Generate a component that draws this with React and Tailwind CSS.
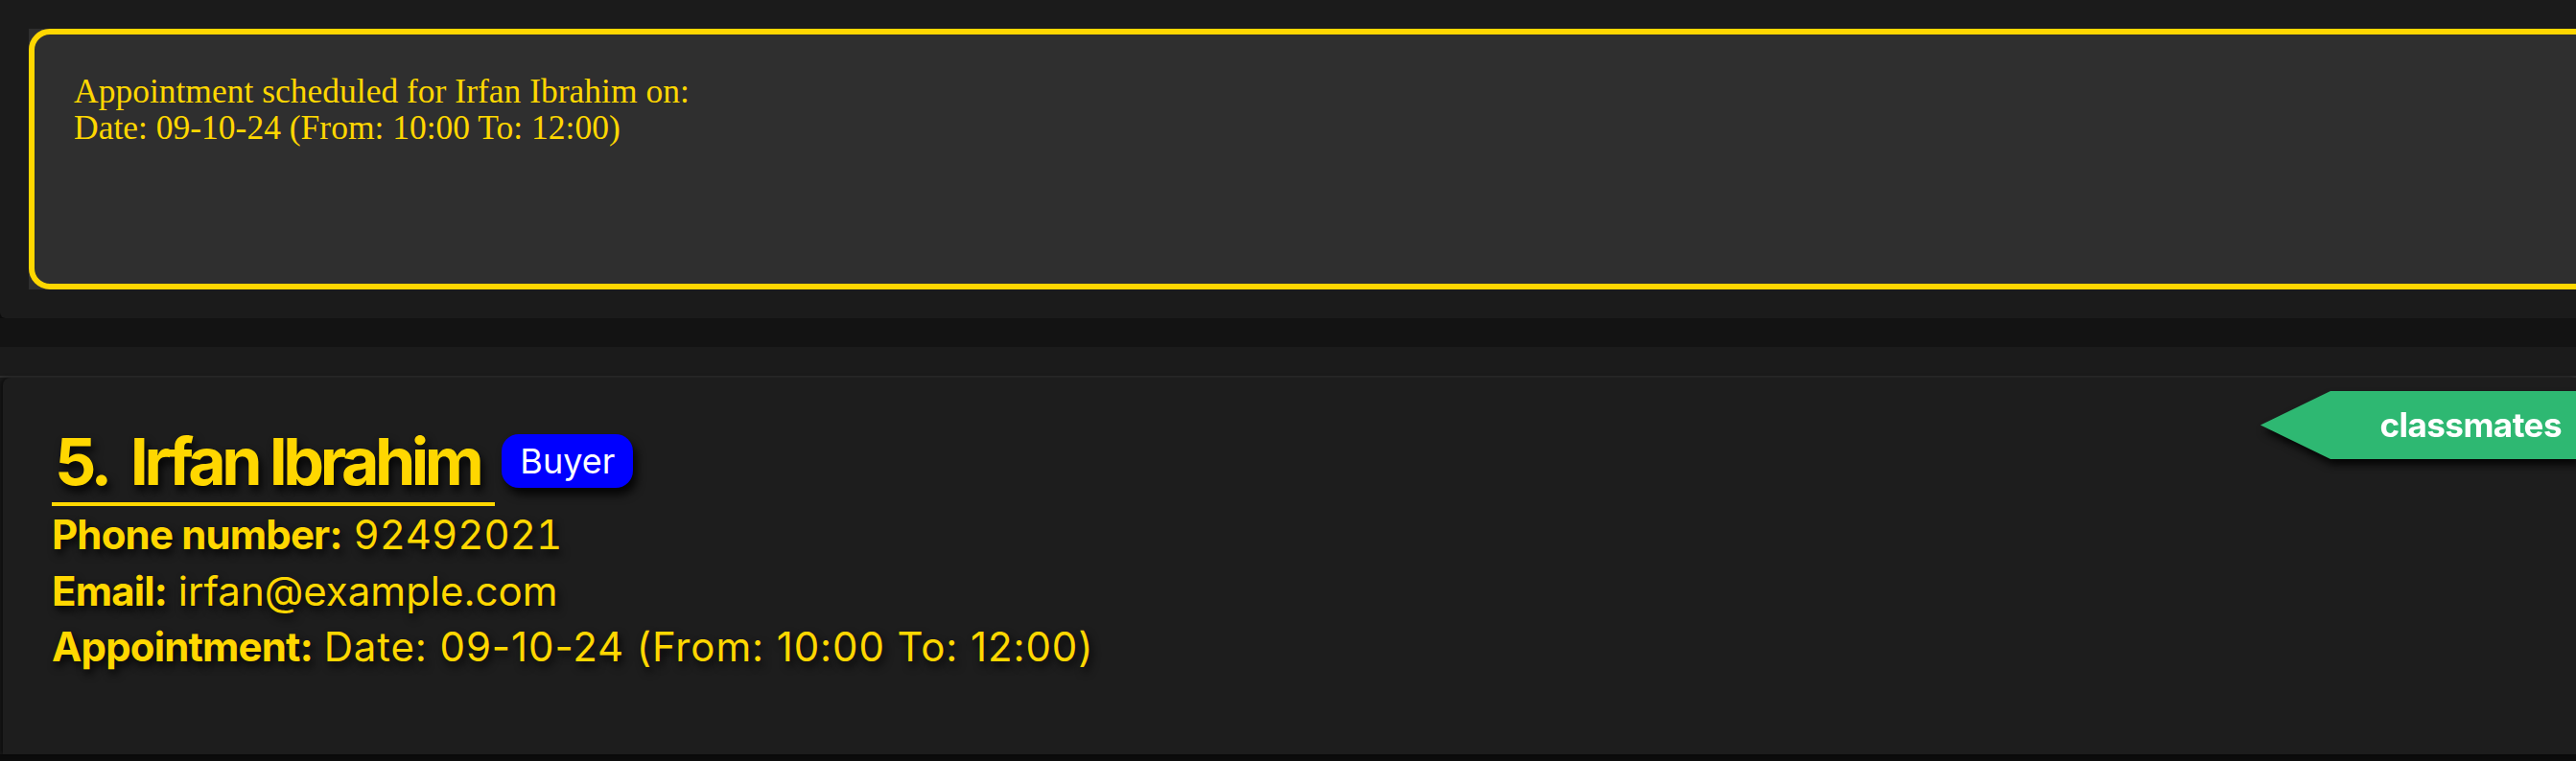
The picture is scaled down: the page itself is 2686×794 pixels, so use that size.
import React from 'react';

const YELLOW = 'text-[#ffd700]';

function ResultBox() {
  return (
    <div className="h-[332px] rounded-bl-[6px] bg-[#1b1b1b] pl-[30px] pt-[30px]">
      <div className="h-[272px] w-[2720px] bg-[#2f2f2f]">
        <div className="h-full rounded-[22px] border-[6px] border-[#ffd700] bg-[#2f2f2f] pl-[41px] pt-[40px]">
          <p className={`font-['Liberation_Serif',serif] text-[35.5px] leading-[38px] ${YELLOW}`}>
            Appointment scheduled for Irfan Ibrahim on:
            <br />
            Date: 09-10-24 (From: 10:00 To: 12:00)
          </p>
        </div>
      </div>
    </div>
  );
}

function Field({ label, value, valueClass = '' }) {
  return (
    <p className="[text-shadow:3px_5px_8px_rgba(0,0,0,0.85)]">
      <span className="font-bold tracking-[-0.02em]">{label}:</span>{' '}
      <span className={valueClass}>{value}</span>
    </p>
  );
}

function Tag({ name }) {
  return (
    <div className="mt-[14px] [filter:drop-shadow(3px_6px_4px_rgba(0,0,0,0.85))]">
      <div className="flex h-[71px] w-[329px] items-center justify-end bg-[#2eb872] pr-[15px] [clip-path:polygon(73px_0,100%_0,100%_100%,73px_100%,0_50%)]">
        <span className="font-['Inter',sans-serif] text-[35px] font-bold tracking-[-0.015em] text-white">{name}</span>
      </div>
    </div>
  );
}

function PersonCard() {
  return (
    <div className="ml-[3px] flex h-[393px] rounded-tl-[8px] bg-[#1d1d1d] shadow-[-3px_0_4px_rgba(0,0,0,0.5)]">
      <div className={`flex-1 pl-[51px] pt-[53px] font-['Inter',sans-serif] ${YELLOW}`}>
        <div className="flex items-start">
          <h2 className="border-b-[4px] border-[#ffd700] pb-[9px] pl-[3px] pr-[16px] text-[68px] font-bold leading-[68px] tracking-[-0.066em] [text-shadow:3px_6px_10px_rgba(0,0,0,0.9)]">
            5.&nbsp; Irfan Ibrahim
          </h2>
          <span className="ml-[7px] mt-[6px] flex h-[56px] w-[137px] items-center justify-center rounded-[18px] bg-[#0000ff] text-[36px] text-white shadow-[4px_7px_10px_rgba(0,0,0,0.85)]">
            Buyer
          </span>
        </div>
        <div className="mt-[1px] text-[42px] leading-[58.5px]">
          <Field label="Phone number" value="92492021" valueClass="tabular-nums" />
          <Field label="Email" value="irfan@example.com" />
          <Field
            label="Appointment"
            value="Date: 09-10-24 (From: 10:00 To: 12:00)"
            valueClass="tracking-[0.021em]"
          />
        </div>
      </div>
      <Tag name="classmates" />
    </div>
  );
}

export default function App() {
  return (
    <div className="flex h-[794px] w-[2686px] flex-col overflow-hidden bg-[#0c0c0c]">
      <ResultBox />
      <div className="h-[30px] bg-[#131313]" />
      <div className="bg-[#1b1b1b] pt-[30px]">
        <div className="border-t-[2px] border-[#2d2d2d]">
          <PersonCard />
        </div>
      </div>
    </div>
  );
}
